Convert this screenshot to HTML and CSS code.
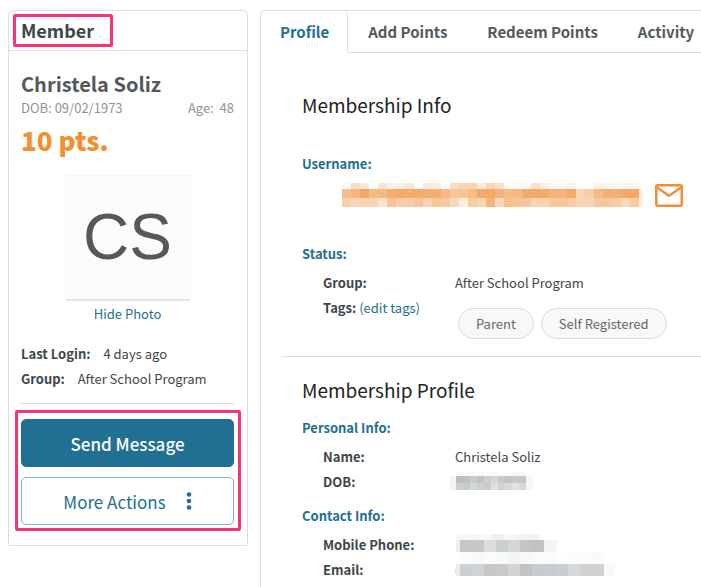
FILE: index.html
```html
<!DOCTYPE html>
<html lang="en">
<head>
    <meta charset="UTF-8">
    <meta name="viewport" content="width=device-width, initial-scale=1.0">
    <title>Member Profile</title>
    <link rel="stylesheet" href="styles.css">
</head>
<body>
    <aside class="member-card">
        <div class="card-header">
            <h2 class="highlight">Member</h2>
        </div>
        <div class="card-body">
            <h1 class="member-name">Christela Soliz</h1>
            <div class="member-meta">
                <span>DOB: 09/02/1973</span>
                <span>Age:&nbsp; 48</span>
            </div>
            <div class="points">10 pts.</div>
            <div class="photo">CS</div>
            <a href="#" class="hide-photo">Hide Photo</a>
            <div class="facts">
                <p><b>Last Login:</b> 4 days ago</p>
                <p><b>Group:</b> After School Program</p>
            </div>
            <div class="actions">
                <button type="button" class="btn btn-primary">Send Message</button>
                <button type="button" class="btn btn-outline">
                    More Actions
                    <svg class="dots" width="6" height="18" viewBox="0 0 6 18">
                        <circle cx="3" cy="2.5" r="2.3"/>
                        <circle cx="3" cy="9" r="2.3"/>
                        <circle cx="3" cy="15.5" r="2.3"/>
                    </svg>
                </button>
            </div>
        </div>
    </aside>

    <main class="panel">
        <nav class="tabs">
            <a href="#" class="tab active">Profile</a>
            <a href="#" class="tab">Add Points</a>
            <a href="#" class="tab">Redeem Points</a>
            <a href="#" class="tab">Activity</a>
        </nav>

        <section class="section info">
            <h2>Membership Info</h2>
            <h3>Username:</h3>
            <div class="username">
                <svg class="mask" id="maskUser" width="302" height="25"></svg>
                <a href="#" aria-label="Send email">
                    <svg class="mail" width="28" height="23" viewBox="0 0 28 23">
                        <rect x="1.25" y="1.25" width="25.5" height="20.5" rx="1.5"/>
                        <path d="M2 3.5l12 8.2 12-8.2"/>
                    </svg>
                </a>
            </div>
            <h3>Status:</h3>
            <dl>
                <dt>Group:</dt>
                <dd>After School Program</dd>
                <dt>Tags: <a href="#">(edit tags)</a></dt>
                <dd class="tags">
                    <span class="tag">Parent</span>
                    <span class="tag">Self Registered</span>
                </dd>
            </dl>
        </section>

        <section class="section">
            <h2>Membership Profile</h2>
            <h3>Personal Info:</h3>
            <dl>
                <dt>Name:</dt>
                <dd>Christela Soliz</dd>
                <dt>DOB:</dt>
                <dd><svg class="mask" id="maskDob" width="84" height="20"></svg></dd>
            </dl>
            <h3>Contact Info:</h3>
            <dl>
                <dt>Mobile Phone:</dt>
                <dd><svg class="mask" id="maskPhone" width="106" height="22"></svg></dd>
                <dt>Email:</dt>
                <dd><svg class="mask" id="maskEmail" width="161" height="38"></svg></dd>
            </dl>
        </section>
    </main>

    <script src="script.js"></script>
</body>
</html>
```
FILE: styles.css
```css
* {
    box-sizing: border-box;
}
body {
    font-family: "Noto Sans CJK SC", "Noto Sans CJK JP", "Noto Sans", sans-serif;
    font-size: 13px;
    line-height: 25px;
    color: #3e4649;
    background-color: #fff;
    display: flex;
    align-items: flex-start;
    gap: 12px;
    margin: 0;
    padding: 10px 0 0 8px;
    min-height: 100vh;
    overflow: hidden;
}
h1, h2, h3, p, dl, dd {
    margin: 0;
}
a {
    color: #217093;
    text-decoration: none;
}
a:hover {
    text-decoration: underline;
}
.member-card {
    flex: 0 0 240px;
    border: 1px solid #dedede;
    border-radius: 5px 5px 0 0;
}
.card-header {
    padding: 3px 4px;
    border-bottom: 1px solid #dedede;
}
.highlight {
    width: 100px;
    border: 3px solid #fb3470;
    border-radius: 2px;
    padding: 0 5px;
    font-size: 18px;
    line-height: 27px;
}
.card-body {
    padding: 20px 13px 14px 12px;
}
.member-name {
    font-size: 20px;
    line-height: 26px;
    color: #53585b;
}
.member-meta {
    display: flex;
    justify-content: space-between;
    line-height: 22px;
    color: #919496;
}
.points {
    font-size: 26px;
    font-weight: 900;
    line-height: 42px;
    color: #f28f30;
}
.photo {
    width: 126px;
    height: 126px;
    margin: 14px auto 0;
    background-color: #fcfcfc;
    border: 1px solid #f6f6f6;
    border-bottom: 2px solid #e4e4e4;
    border-radius: 2px;
    font-family: "Liberation Sans", sans-serif;
    font-size: 64px;
    line-height: 122px;
    text-align: center;
    color: #53595c;
}
.hide-photo {
    display: block;
    text-align: center;
}
.facts {
    padding: 15px 0 12px;
    border-bottom: 1px solid #dedede;
}
.facts b {
    margin-right: 10px;
}
.actions {
    display: flex;
    flex-direction: column;
    gap: 10px;
    margin: 6px -7px 0 -6px;
    padding: 6px 4px 3px 3px;
    border: 3px solid #fb3470;
    border-radius: 2px;
}
.btn {
    display: flex;
    align-items: center;
    justify-content: center;
    gap: 20px;
    width: 100%;
    height: 48px;
    padding: 0;
    border: 1px solid #217093;
    border-radius: 5px;
    font-family: inherit;
    font-size: 17px;
    cursor: pointer;
}
.btn-primary {
    background-color: #217093;
    color: #fff;
    font-weight: 500;
}
.btn-outline {
    background-color: #fff;
    border-color: #7fb0c4;
    color: #217093;
}
.dots {
    fill: #217093;
}
.panel {
    flex: 1;
    min-width: 0;
    border: 1px solid #dedede;
    border-width: 1px 0 0 1px;
    border-radius: 5px 0 0 0;
    min-height: 600px;
}
.tabs {
    display: flex;
}
.tabs::after {
    content: "";
    flex: 1;
    border-bottom: 1px solid #dedede;
}
.tab {
    padding: 0 20px;
    font-size: 15px;
    font-weight: bold;
    line-height: 41px;
    white-space: nowrap;
    color: #54595c;
    border-bottom: 1px solid #dedede;
}
.tab.active {
    padding: 0 18px 0 19px;
    color: #217093;
    border-bottom-color: #fff;
    border-right: 1px solid #dedede;
    border-radius: 0 5px 0 0;
}
.section {
    margin-left: 20px;
    padding: 18px 0 17px 21px;
    border-bottom: 1px solid #dedede;
}
.section:last-child {
    border-bottom: none;
}
.section h2 {
    margin-bottom: 10px;
    font-size: 19px;
    font-weight: normal;
    line-height: 30px;
    color: #212425;
}
.section h3 {
    margin-bottom: 4px;
    font-size: 13px;
    line-height: 25px;
    color: #217093;
}
.info {
    padding-top: 37px;
}
.info h2 {
    margin-bottom: 31px;
}
.username {
    display: flex;
    align-items: center;
    gap: 12px;
    height: 30px;
    margin-bottom: 31px;
    padding-left: 39px;
}
.username a {
    display: flex;
}
.mail {
    fill: none;
    stroke: #f08f31;
    stroke-width: 2.5;
}
.mask {
    display: block;
    overflow: visible;
    shape-rendering: crispEdges;
}
dl {
    display: grid;
    grid-template-columns: 132px 1fr;
    padding-left: 21px;
}
dl + h3 {
    margin-top: 9px;
}
dt {
    font-weight: bold;
}
dt a {
    font-weight: normal;
}
dd {
    display: flex;
    align-items: center;
}
dd .mask {
    margin: -8px 0;
}
.tags {
    gap: 7px;
    padding: 13px 0 0 3px;
}
.tag {
    padding: 0 17px;
    background-color: #f8f8f8;
    border: 1px solid #d9dada;
    border-radius: 16px;
    line-height: 29px;
    white-space: nowrap;
    color: #63686b;
}
```
FILE: script.js
```js
// each row: x, y, cell width, cell height, colours
const masks = {
    maskUser: [
        [1, 0, 9, 6, 'fef9f5 fadec3 fbe9dc ffffff fbe3d1 fcf1ea fceee2 fbe7d8 ffffff fbe8d9 fbecdf ffffff fadec4 f8d4b7 f8d4b5 fcebe0 f9d6b8 fae0ca ffffff fef8f3 fef9f5 fadfc9 fceee5 fff9f5 fff9f5 fef5ef ffffff ffffff fdf1e4 fef5ec fff9f5 fef4ee fef5f0'],
        [1, 6, 9, 9, 'f5bd8b f5b57d f3a765 f6b97f f5b784 f4ae6e f3a868 f4ac6e f3ac6d f3ad6e f3ae70 f5b98a f6c698 f5c490 f5bd84 f3a96d f3a769 f4b180 f5bb84 f5b987 f3ab6b f3a968 f3a968 f5b37a f5b47c f3aa68 f8d5b5 f7cfa6 f5ba80 f3b075 f3b075 f3a968 f3a968'],
        [1, 15, 9, 9, 'f7cfa7 f8d5b8 f8d4b2 f8d4b0 fbe2d0 f6c397 f7cea5 f7cda9 f6c498 f8d2b0 f6c798 f6c89c f8d8b6 fcede0 f7cda3 f8d4b0 f4b47c f8d7bc f5bf8a f6c594 f6c796 f8d4b0 f8d4b0 f6c898 f6c898 f7cda4 f8d4b5 f8d4b5 f6c798 f6c798 f7cda4 f8d9bc f7cda4'],
        [298, 6, 4, 18, 'fceee6']
    ],
    maskDob: [
        [1, 0, 7, 4, 'f8f8f8 f9fafa fafafa f7f9f9 fdfdfd fafafa fafafa fbfbfb f5f6f6 fafafa'],
        [-5, 4, 6, 14, 'f4f3f1'],
        [1, 4, 7, 7, 'babdc0 bdc0c5 c7cccb bfc3c5 cacecf d4d7d7 c7c9c5 c1c4c7 c6c9cb c5c8cb f4f6f8'],
        [1, 11, 7, 7, 'cbcecf c6cacd d4d8d7 cdd1d2 c8cccc e0e2e2 d0d3d1 d5d9dd e0e2e4 d5d9dc f4f6f8']
    ],
    maskPhone: [
        [1, 0, 12, 6, 'f6f7f7 f4f6f6 f9f9f9 edf0f1 f7f7f7 f2f3f3 f2f3f3'],
        [1, 6, 4, 12, 'efefed'],
        [5, 6, 12, 12, 'c6c7c9 c6c7c9 dcdedb cacfd1 d4d6d8 c2c6c7 c0c3c5'],
        [89, 6, 13, 12, 'f2f4f7']
    ],
    maskEmail: [
        [5, 1, 12, 12, 'fafbfb f7f8f7 fafbfa f8f9f9 f4f4f4 f8f9f8 fafbfa fafbfa fcfdfd fcfcfc fcfcfc fafafa'],
        [0, 18, 1, 4, 'fbdcb8'],
        [1, 13, 4, 12, 'ebecea'],
        [5, 13, 12, 12, 'cdd0d2 d0d3d5 c6c7c9 c8cacc d2d4d6 c0c3c4 c7cbce c8ccd0 cccdd0 d5d9dc cfd1d3 cfd1d3'],
        [149, 13, 11, 12, 'f9f9f9']
    ]
};

for (const id in masks) {
    let rects = '';
    masks[id].forEach(([x, y, w, h, colors]) => {
        colors.split(' ').forEach((color, i) => {
            rects += `<rect x="${x + i * w}" y="${y}" width="${w}" height="${h}" fill="#${color}"/>`;
        });
    });
    document.getElementById(id).innerHTML = rects;
}
```
